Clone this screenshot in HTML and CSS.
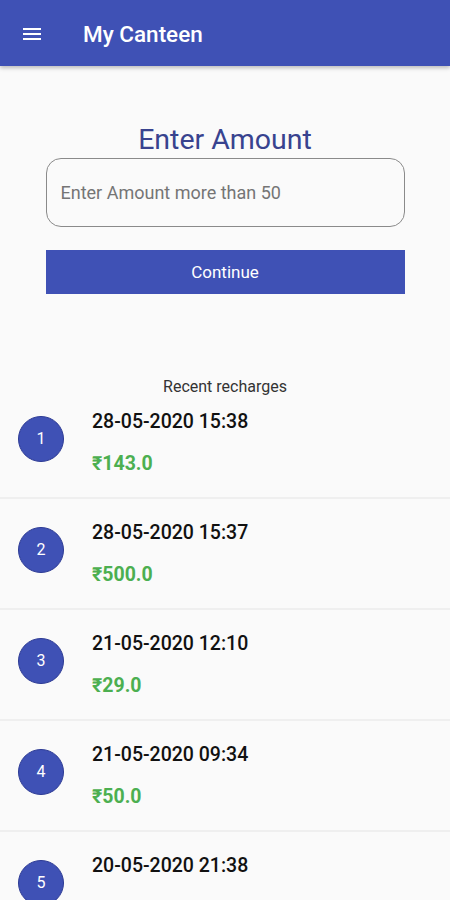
FILE: index.html
```html
<!DOCTYPE html>
<html>
<head>
<meta charset="utf-8">
<link rel="stylesheet" href="styles.css">
</head>
<body>
<header class="appbar">
  <svg class="menu" width="24" height="24" viewBox="0 0 24 24"><path d="M3 6h18v2H3zM3 11h18v2H3zM3 16h18v2H3z" fill="#fff"/></svg>
  <span class="title">My Canteen</span>
</header>
<main class="content">
  <h1 class="heading">Enter Amount</h1>
  <div class="field">Enter Amount more than 50</div>
  <button class="btn">Continue</button>
  <div class="recent">Recent recharges</div>
  <ul class="list">
    <li class="row"><span class="badge">1</span><div class="info"><div class="date">28-05-2020 15:38</div><div class="amt">₹143.0</div></div></li>
    <li class="row"><span class="badge">2</span><div class="info"><div class="date">28-05-2020 15:37</div><div class="amt">₹500.0</div></div></li>
    <li class="row"><span class="badge">3</span><div class="info"><div class="date">21-05-2020 12:10</div><div class="amt">₹29.0</div></div></li>
    <li class="row"><span class="badge">4</span><div class="info"><div class="date">21-05-2020 09:34</div><div class="amt">₹50.0</div></div></li>
    <li class="row"><span class="badge">5</span><div class="info"><div class="date">20-05-2020 21:38</div><div class="amt"></div></div></li>
  </ul>
</main>
</body>
</html>
```
FILE: styles.css
```css
* { box-sizing: border-box; }
html, body { margin: 0; padding: 0; }
body {
  background: #fafafa;
  font-family: Roboto, "Noto Sans", sans-serif;
  width: 450px;
  height: 900px;
  overflow: hidden;
}
.appbar {
  height: 66px;
  background: #3f51b5;
  display: flex;
  align-items: center;
  padding-left: 20px;
  box-shadow: 0 2px 4px rgba(0,0,0,0.25);
  position: relative;
}
.menu { display: block; margin-top: 2px; }
.title {
  color: #fff;
  font-size: 22.5px;
  font-weight: 500;
  margin-left: 39px;
  margin-top: 2px;
}
.content { display: flex; flex-direction: column; align-items: center; }
.heading {
  margin: 56px 0 0;
  font-size: 28.5px;
  line-height: 36px;
  font-weight: 400;
  color: #38438f;
}
.field {
  margin-top: 0;
  width: 359px;
  height: 69px;
  border: 1.5px solid #8a8a8a;
  border-radius: 15px;
  display: flex;
  align-items: center;
  padding-left: 14px;
  font-size: 18px;
  color: #757575;
}
.btn {
  margin-top: 23px;
  width: 359px;
  height: 44px;
  border: none;
  background: #3f51b5;
  color: #fff;
  font-family: inherit;
  font-size: 17px;
  padding: 0;
}
.recent {
  margin-top: 83px;
  font-size: 16px;
  line-height: 20px;
  color: #333;
}
.list {
  list-style: none;
  margin: -9px 0 0;
  padding: 0;
  width: 100%;
}
.row {
  display: flex;
  align-items: center;
  height: 111px;
  border-bottom: 2px solid #efefef;
  padding-left: 18px;
}
.badge {
  width: 46px;
  height: 46px;
  margin-bottom: 8px;
  border-radius: 50%;
  background: #3f51b5;
  border: 1px solid #2c3a94;
  color: #fff;
  font-size: 16px;
  display: flex;
  align-items: center;
  justify-content: center;
  flex-shrink: 0;
}
.info {
  margin-left: 28px;
  display: flex;
  flex-direction: column;
  gap: 18px;
}
.date {
  font-size: 19.5px;
  line-height: 24px;
  font-weight: 500;
  color: #111;
}
.amt {
  font-size: 19.5px;
  line-height: 24px;
  height: 24px;
  font-weight: 700;
  color: #4caf50;
}
```
